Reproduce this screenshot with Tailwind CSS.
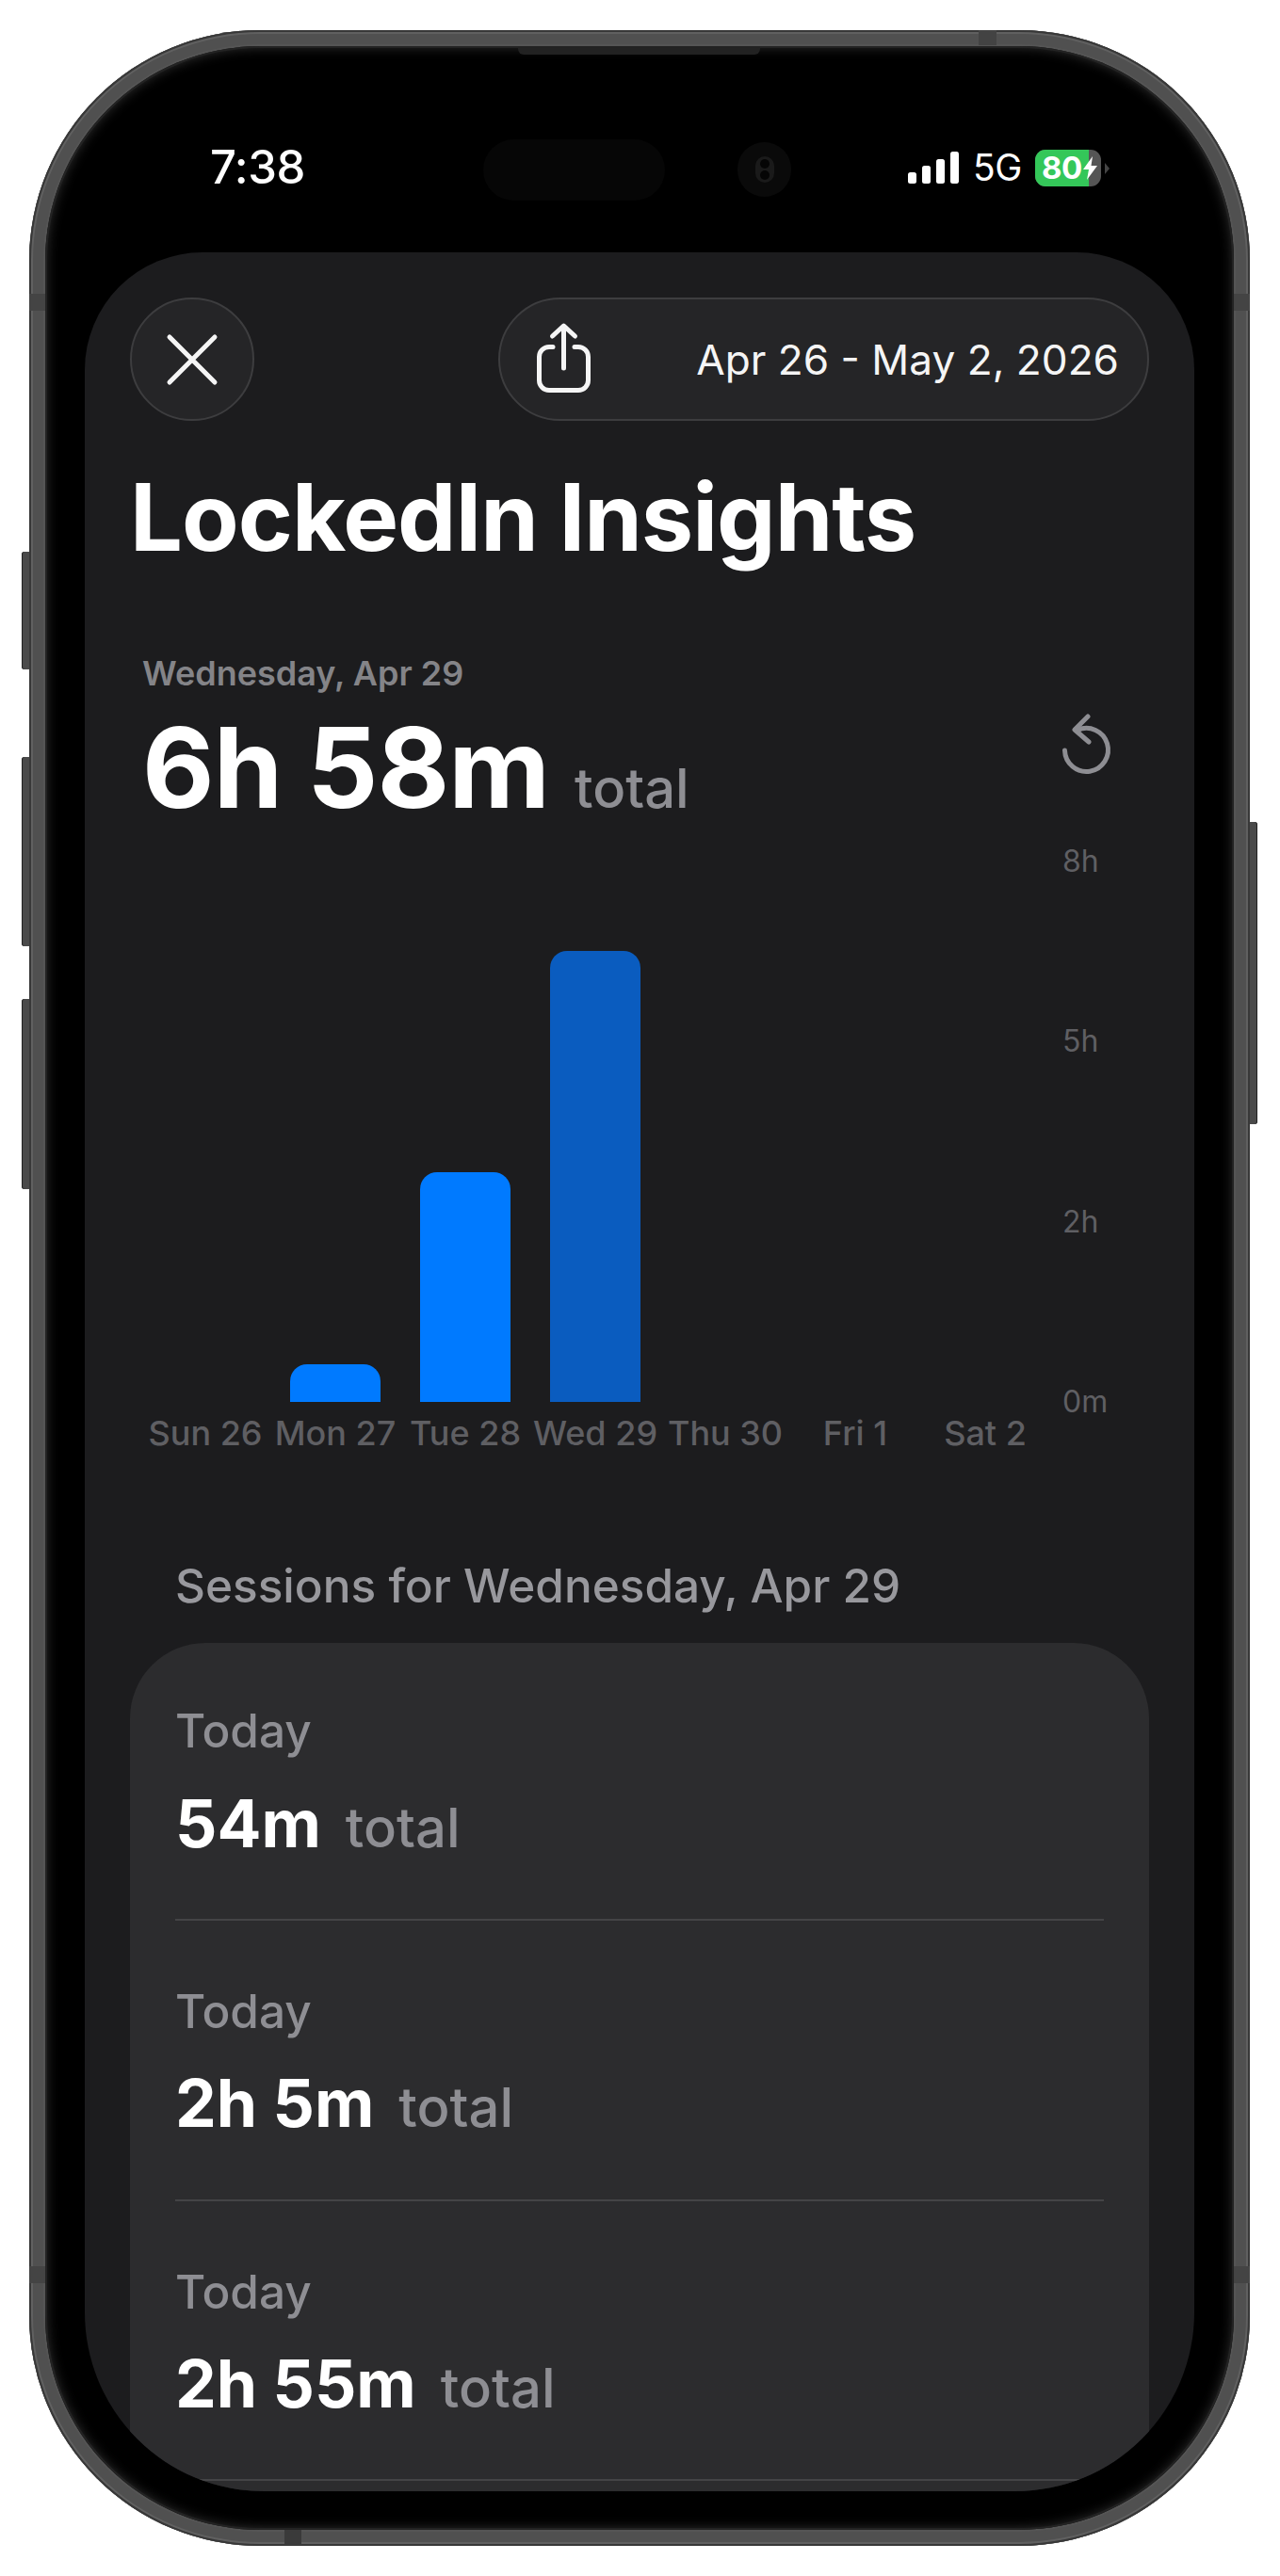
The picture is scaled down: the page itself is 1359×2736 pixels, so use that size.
<!DOCTYPE html>
<html>
<head>
<meta charset="utf-8">
<script src="https://cdn.jsdelivr.net/npm/@tailwindcss/browser@4"></script>
</head>
<body class="bg-white font-['Inter','Liberation_Sans',sans-serif] h-[2736px] overflow-hidden pt-[32px] pl-[31px]">
<div class="relative w-[1296px] h-[2672px] rounded-[245px] bg-[#555555] p-[17px] shadow-[inset_0_0_0_2px_#383838,inset_0_0_0_4px_#606060,inset_0_0_0_15px_#505050]">
  <!-- side buttons -->
  <div class="absolute left-[-8px] top-[554px] w-[8px] h-[125px] rounded-l-[3px] bg-[#4a4a4a] shadow-[inset_1px_0_0_#222]"></div>
  <div class="absolute left-[-8px] top-[772px] w-[8px] h-[201px] rounded-l-[3px] bg-[#4a4a4a] shadow-[inset_1px_0_0_#222]"></div>
  <div class="absolute left-[-8px] top-[1029px] w-[8px] h-[202px] rounded-l-[3px] bg-[#4a4a4a] shadow-[inset_1px_0_0_#222]"></div>
  <div class="absolute right-[-8px] top-[841px] w-[8px] h-[321px] rounded-r-[3px] bg-[#4a4a4a] shadow-[inset_-1px_0_0_#222]"></div>
  <!-- antenna bands -->
  <div class="absolute left-0 top-[280px] w-[17px] h-[18px] bg-[#444444]"></div>
  <div class="absolute right-0 top-[280px] w-[17px] h-[18px] bg-[#444444]"></div>
  <div class="absolute left-0 top-[2375px] w-[17px] h-[18px] bg-[#444444]"></div>
  <div class="absolute right-0 top-[2375px] w-[17px] h-[18px] bg-[#444444]"></div>
  <div class="absolute left-[1008px] top-0 w-[19px] h-[16px] bg-[#434343]"></div>
  <div class="absolute left-[271px] bottom-0 w-[18px] h-[17px] bg-[#3a3a3a]"></div>

  <div class="relative h-full rounded-[228px] bg-black shadow-[inset_0_0_0_2px_#232323,inset_0_0_14px_#3a3a3a] flex flex-col px-[42px] pb-[41px]">
    <!-- earpiece -->
    <div class="absolute left-[502px] top-0 w-[257px] h-[9px] rounded-b-[6px] bg-[#222]"></div>

    <!-- status bar -->
    <div class="h-[219px] shrink-0 flex items-start text-white">
      <div class="ml-[133px] mt-[105px] w-[100px] text-[49px] leading-[48px] font-medium tracking-[-0.5px]">7:38</div>
      <div class="ml-[190px] mt-[99px] w-[193px] h-[65px] rounded-full bg-[#060606]"></div>
      <div class="ml-[77px] mt-[102px] w-[57px] h-[58px] rounded-full bg-[#0a0a0a] flex items-center justify-center">
        <div class="w-[20px] h-[28px] rounded-full bg-[#1a1a1a] flex flex-col items-center justify-center gap-[2px]">
          <div class="w-[10px] h-[10px] rounded-full bg-[#050505]"></div>
          <div class="w-[10px] h-[10px] rounded-full bg-[#050505]"></div>
        </div>
      </div>
      <div class="ml-[124px] mt-[112px] h-[34px] flex items-end gap-[6px]">
        <div class="w-[9px] h-[12px] rounded-[2.5px] bg-white"></div>
        <div class="w-[9px] h-[19px] rounded-[2.5px] bg-white"></div>
        <div class="w-[9px] h-[26px] rounded-[2.5px] bg-white"></div>
        <div class="w-[9px] h-[34px] rounded-[2.5px] bg-white"></div>
      </div>
      <div class="ml-[15px] mt-[106px] w-[50px] text-[39px] leading-[46px] font-normal tracking-[-0.5px]">5G</div>
      <div class="ml-[16px] mt-[110px] relative w-[70px] h-[39px] rounded-[11px] overflow-hidden flex bg-[#555]">
        <div class="w-[57px] h-full bg-[#34c759] pl-[7px] text-[33px] leading-[39px] font-bold text-white tracking-[-0.5px]">80</div>
        <svg class="absolute left-[50px] top-[7px]" width="17" height="25" viewBox="0 0 17 25"><path d="M11 0 L1 14 H7 L5 25 L16 10 H9.5 Z" fill="#fff"/></svg>
      </div>
      <div class="ml-[4px] mt-[124px] w-0 h-0 border-y-[6px] border-y-transparent border-l-[5px] border-l-[#444]"></div>
    </div>

    <!-- sheet -->
    <div class="flex-1 overflow-hidden rounded-t-[125px] rounded-b-[190px] bg-[#1c1c1e]">
      <!-- header buttons -->
      <div class="flex justify-between pt-[48px] pl-[48px] pr-[48px]">
        <div class="w-[132px] h-[131px] rounded-full bg-[#252527] border-[2px] border-[#3d3d3f] flex items-center justify-center">
          <svg width="56" height="56" viewBox="0 0 56 56" fill="none" stroke="#f5f5f5" stroke-width="5" stroke-linecap="round"><path d="M4 4 L52 52 M52 4 L4 52"/></svg>
        </div>
        <div class="w-[691px] h-[131px] rounded-full bg-[#252527] border-[2px] border-[#3d3d3f] flex items-center justify-between pl-[35px] pr-[30px]">
          <svg width="65" height="80" viewBox="0 0 65 80" fill="none" stroke="#f5f5f5" stroke-width="5" stroke-linecap="round" stroke-linejoin="round"><path d="M21 26.5 H17 A10.5 10.5 0 0 0 6.5 37 V62 A10.5 10.5 0 0 0 17 72.5 H48 A10.5 10.5 0 0 0 58.5 62 V37 A10.5 10.5 0 0 0 48 26.5 H44"/><path d="M32.5 49 V5 M20.5 15 L32.5 4 L44.5 15"/></svg>
          <div class="text-[44.2px] leading-[56px] text-[#f5f5f5] font-normal">Apr 26 - May 2, 2026</div>
        </div>
      </div>

      <div class="mt-[47px] pl-[48px] text-[99px] leading-[110px] font-bold text-white tracking-[-1px]">LockedIn Insights</div>

      <!-- total -->
      <div class="mt-[86px] pl-[61px] pr-[84px] flex justify-between items-start">
        <div>
          <div class="text-[36px] leading-[50px] font-semibold text-[#848488]">Wednesday, Apr 29</div>
          <div class="mt-[15px] flex items-baseline gap-[27px] leading-[120px]">
            <span class="text-[118px] font-bold text-white tracking-[-1px]">6h 58m</span>
            <span class="text-[58px] font-medium text-[#8e8e93]">total</span>
          </div>
        </div>
        <svg class="mt-[66px]" width="60" height="70" viewBox="0 0 60 70" fill="none" stroke="#8e8e93" stroke-width="5" stroke-linecap="round" stroke-linejoin="round"><path d="M6.5 41 A23 23 0 1 0 20 19.5"/><path d="M31 5 L17 19 L32 32"/></svg>
      </div>

      <!-- chart -->
      <div class="mt-[18px] flex pl-[59px]">
        <div class="w-[966px] h-[574px] grid grid-cols-7 items-end">
          <div></div>
          <div class="flex justify-center"><div class="w-[96px] h-[40px] rounded-t-[18px] bg-[#007aff]"></div></div>
          <div class="flex justify-center"><div class="w-[96px] h-[244px] rounded-t-[18px] bg-[#007aff]"></div></div>
          <div class="flex justify-center"><div class="w-[96px] h-[479px] rounded-t-[18px] bg-[#0a5cbf]"></div></div>
          <div></div><div></div><div></div>
        </div>
        <div class="ml-[13px] -my-[20px] h-[614px] flex flex-col justify-between text-[32px] leading-[40px] text-[#5f5f63]">
          <div>8h</div><div>5h</div><div>2h</div><div>0m</div>
        </div>
      </div>
      <div class="mt-[13px] ml-[59px] w-[966px] grid grid-cols-7 text-center text-[36px] leading-[40px] font-medium text-[#5f5f63] whitespace-nowrap">
        <div>Sun 26</div><div>Mon 27</div><div>Tue 28</div><div>Wed 29</div><div>Thu 30</div><div>Fri 1</div><div>Sat 2</div>
      </div>

      <div class="mt-[112px] pl-[96px] text-[49.5px] leading-[60px] font-medium text-[#98989d]">Sessions for Wednesday, Apr 29</div>

      <!-- sessions -->
      <div class="mt-[31px] mx-[48px] rounded-t-[80px] bg-[#2c2c2e] px-[48px] h-[1000px]">
        <div class="pt-[63px] pb-[57px] border-b-[2px] border-[#444446]">
          <div class="text-[49.5px] leading-[60px] font-medium text-[#8e8e93]">Today</div>
          <div class="mt-[29px] flex items-baseline gap-[26px] leading-[80px]"><span class="text-[69.5px] font-bold text-white">54m</span><span class="text-[58px] font-medium text-[#8e8e93]">total</span></div>
        </div>
        <div class="pt-[66px] pb-[58px] border-b-[2px] border-[#444446]">
          <div class="text-[49.5px] leading-[60px] font-medium text-[#8e8e93]">Today</div>
          <div class="mt-[28px] flex items-baseline gap-[26px] leading-[80px]"><span class="text-[69.5px] font-bold text-white">2h 5m</span><span class="text-[58px] font-medium text-[#8e8e93]">total</span></div>
        </div>
        <div class="pt-[66px] pb-[57px] border-b-[2px] border-[#444446]">
          <div class="text-[49.5px] leading-[60px] font-medium text-[#8e8e93]">Today</div>
          <div class="mt-[28px] flex items-baseline gap-[26px] leading-[80px]"><span class="text-[69.5px] font-bold text-white">2h 55m</span><span class="text-[58px] font-medium text-[#8e8e93]">total</span></div>
        </div>
      </div>
    </div>
  </div>
</div>
</body>
</html>
